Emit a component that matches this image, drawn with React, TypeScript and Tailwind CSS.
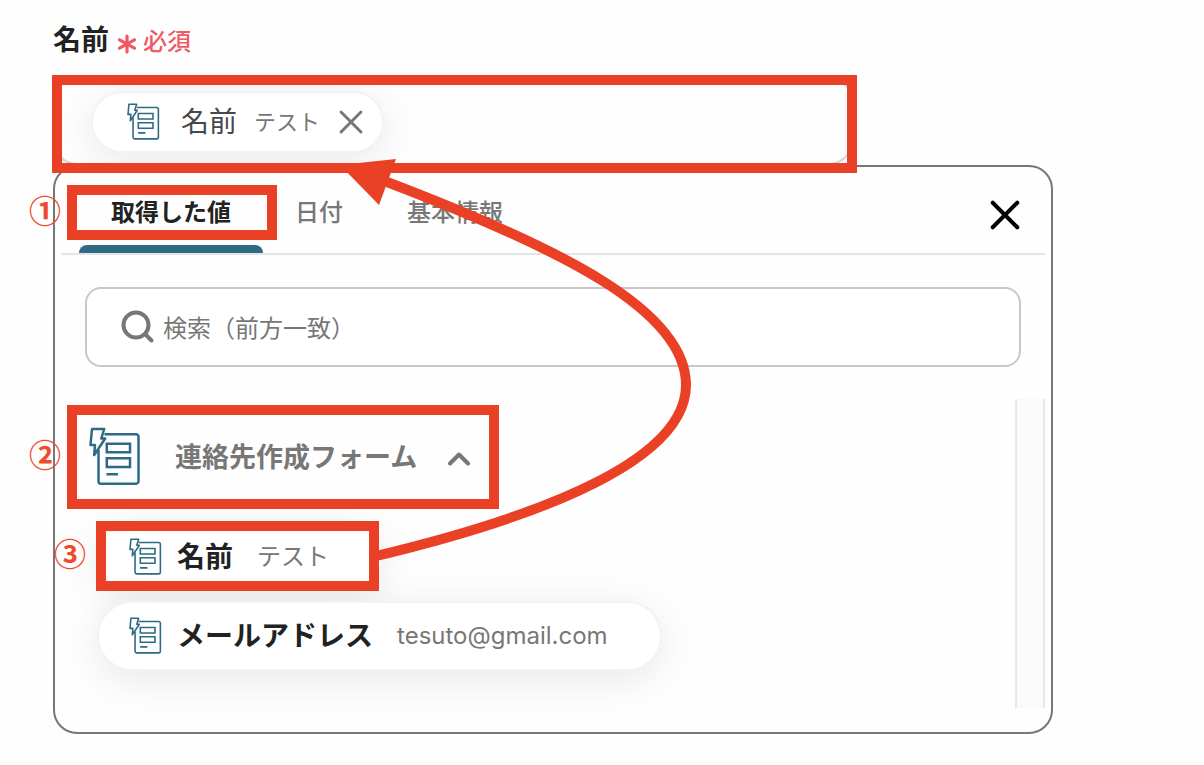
import { useState } from 'react'

const tabs = [
  { id: 'values', label: '取得した値' },
  { id: 'date', label: '日付' },
  { id: 'basic', label: '基本情報' },
]

const values = [
  { id: 'name', label: '名前', sample: 'テスト' },
  { id: 'email', label: 'メールアドレス', sample: 'tesuto@gmail.com' },
]

function FormIcon({ className }: { className: string }) {
  return (
    <svg viewBox="0 0 52 60" fill="none" stroke="#2f6a85" strokeWidth="2.5" strokeLinejoin="round" className={className} aria-hidden="true">
      <path d="M15.5 7.2H47a2.5 2.5 0 0 1 2.5 2.5V54.2a2.5 2.5 0 0 1-2.5 2.5H12A2.5 2.5 0 0 1 9.5 54.2V23" />
      <path d="M3 2H15.2L12.3 11.5H16.2L5.2 28L6 18H1.5Z" />
      <path d="M17.8 16.7H41v8.6H17.8ZM17.8 31.3H41v8.6H17.8ZM17.5 47.2h11.5" strokeLinejoin="miter" />
    </svg>
  )
}

function CloseIcon({ className, strokeWidth }: { className: string; strokeWidth: number }) {
  return (
    <svg viewBox="0 0 30 30" fill="none" stroke="currentColor" strokeWidth={strokeWidth} strokeLinecap="round" className={className} aria-hidden="true">
      <path d="M3.5 3.5L26.5 26.5M26.5 3.5L3.5 26.5" />
    </svg>
  )
}

// Red frame drawn over the element it sits in
function Mark({ className }: { className: string }) {
  return <span className={`pointer-events-none absolute z-10 border-[10px] border-[#ea4025] ${className}`} />
}

function Step({ children, className }: { children: string; className: string }) {
  return (
    <span className={`absolute z-10 font-['Noto_Sans_CJK_JP',sans-serif] text-[32px] leading-8 font-bold text-[#ee4a2c] ${className}`}>
      {children}
    </span>
  )
}

export default function App() {
  const [activeTab, setActiveTab] = useState('values')
  const [open, setOpen] = useState(true)
  const [query, setQuery] = useState('')

  return (
    <main className="bg-[#fefefe] pt-5 pr-6 pb-8 pl-[53px] font-['Inter','Noto_Sans_CJK_JP',sans-serif] text-[#222]">
      <div className="mb-[17px] flex items-center text-2xl">
        <label htmlFor="name-field" className="text-[28px] leading-10 font-bold">名前</label>
        <span className="ml-2 flex items-center gap-1.5 pt-1 font-medium text-[#ee5a62]">
          <svg viewBox="0 0 20 20" stroke="currentColor" strokeWidth="3.2" strokeLinecap="round" className="mt-1 size-5" aria-hidden="true">
            <path d="M10 2v16M2.5 5.8l15 8.4M17.5 5.8l-15 8.4" />
          </svg>
          必須
        </span>
      </div>

      <div className="relative max-w-[1000px]">
        {/* Name field */}
        <div className="relative max-w-[800px]">
          <div className="flex overflow-hidden rounded-3xl border-2 border-[#cfd4d8] pt-3 pr-6 pb-2.5 pl-9">
            <div className="flex h-[62px] shrink-0 items-center rounded-full border-2 border-[#f3f3f3] bg-white pr-[18px] pl-[34px] shadow-[0_8px_40px_rgba(0,0,0,0.09)]">
              <FormIcon className="h-[38px] w-[33px]" />
              <span className="ml-[21px] text-[28px] text-[#46484c]">名前</span>
              <span className="ml-[17px] text-[22px] text-[#777]">テスト</span>
              <button type="button" aria-label="削除" className="ml-[18px] text-[#777]">
                <CloseIcon className="size-[26px]" strokeWidth={3.4} />
              </button>
            </div>
            <input id="name-field" type="text" className="ml-4 min-w-0 flex-1 bg-transparent text-2xl outline-none" />
          </div>
          <Mark className="-top-0.5 -right-1 -bottom-2 -left-px" />
        </div>

        {/* Value picker */}
        <section className="relative rounded-3xl border-2 border-[#777] bg-[#fefefe] px-1.5 pb-6">
          <div className="flex h-[88px] items-center border-b-2 border-[#e4e4e4] pl-[18px]">
            <div role="tablist" className="flex flex-1 self-stretch">
              {tabs.map((tab) => (
                <button
                  key={tab.id}
                  type="button"
                  role="tab"
                  aria-selected={activeTab === tab.id}
                  onClick={() => setActiveTab(tab.id)}
                  className={`relative px-8 pt-1.5 text-2xl ${activeTab === tab.id ? 'font-bold text-[#222]' : 'font-medium text-[#777]'}`}
                >
                  {tab.label}
                  {activeTab === tab.id && <span className="absolute inset-x-0 bottom-0 h-2 rounded-t-lg bg-[#2f6a85]" />}
                  {tab.id === 'values' && <Mark className="top-[18px] -right-3.5 bottom-[13px] -left-3" />}
                </button>
              ))}
            </div>
            <button type="button" aria-label="閉じる" className="mt-2.5 mr-6 text-black">
              <CloseIcon className="size-8" strokeWidth={3.8} />
            </button>
            <Step className="top-[26px] -left-[26px]">①</Step>
          </div>

          <label className="mx-6 mt-8 flex h-20 items-center gap-2 rounded-2xl border-2 border-[#c8c8c8] bg-white pr-6 pl-[34px]">
            <svg viewBox="0 0 34 34" fill="none" stroke="#777" strokeWidth="4" strokeLinecap="round" className="size-[34px] shrink-0" aria-hidden="true">
              <circle cx="15" cy="15" r="12.5" />
              <path d="M24.5 24.5l6 6" />
            </svg>
            <input
              type="text"
              value={query}
              onChange={(e) => setQuery(e.target.value)}
              placeholder="検索（前方一致）"
              aria-label="検索"
              className="min-w-0 flex-1 bg-transparent pt-1 text-2xl text-[#222] outline-none placeholder:text-[#777]"
            />
          </label>

          <div className="mt-8 flex">
            <div className="min-h-[309px] flex-1 pt-1.5 pl-1.5">
              <button
                type="button"
                aria-expanded={open}
                onClick={() => setOpen(!open)}
                className="relative flex h-[104px] items-center pr-7 pl-[22px] text-[27px] font-bold text-[#777]"
              >
                <FormIcon className="h-[60px] w-[52px]" />
                <span className="ml-[34px] pt-0.5">連絡先作成フォーム</span>
                <svg viewBox="0 0 24 16" fill="none" stroke="currentColor" strokeWidth="4" strokeLinecap="round" strokeLinejoin="round" className={`mt-1 ml-[30px] h-4 w-6 ${open ? '' : 'rotate-180'}`} aria-hidden="true">
                  <path d="M3 12.5l9-9 9 9" />
                </svg>
                <Mark className="inset-0" />
                <Step className="top-8 -left-[38px]">②</Step>
              </button>

              {open && (
                <ul className="mt-[13px] flex flex-col items-start gap-[9px] pl-[30px]">
                  {values.map((value) => (
                    <li key={value.id} className="relative">
                      <button
                        type="button"
                        className="flex h-[70px] items-center rounded-full border-2 border-[#f3f3f3] bg-white pr-[52px] pl-[30px] shadow-[0_8px_40px_rgba(0,0,0,0.09)]"
                      >
                        <FormIcon className="h-[38px] w-[33px]" />
                        <span className="ml-[15px] text-[28px] font-bold">{value.label}</span>
                        <span className="ml-6 text-2xl text-[#777]">{value.sample}</span>
                      </button>
                      {value.id === 'name' && (
                        <>
                          <Mark className="-top-px right-1 bottom-px -left-px" />
                          <Step className="top-3.5 -left-[43px]">③</Step>
                        </>
                      )}
                    </li>
                  ))}
                </ul>
              )}
            </div>
            <div className="w-[30px] border-x-2 border-[#e8e8e8] bg-[#fafafa]" />
          </div>
        </section>

        {/* Arrow from the picked value to the field */}
        <svg viewBox="0 0 1000 657" width="1000" height="657" fill="none" className="pointer-events-none absolute top-0 left-0 z-20 max-w-none" aria-hidden="true">
          <path d="M321 479.5C507 435 633 379 633 308C633 233 507 171 334 105" stroke="#ea4025" strokeWidth="10" />
          <path d="M287 88L343 82L326 128Z" fill="#ea4025" />
        </svg>
      </div>
    </main>
  )
}
